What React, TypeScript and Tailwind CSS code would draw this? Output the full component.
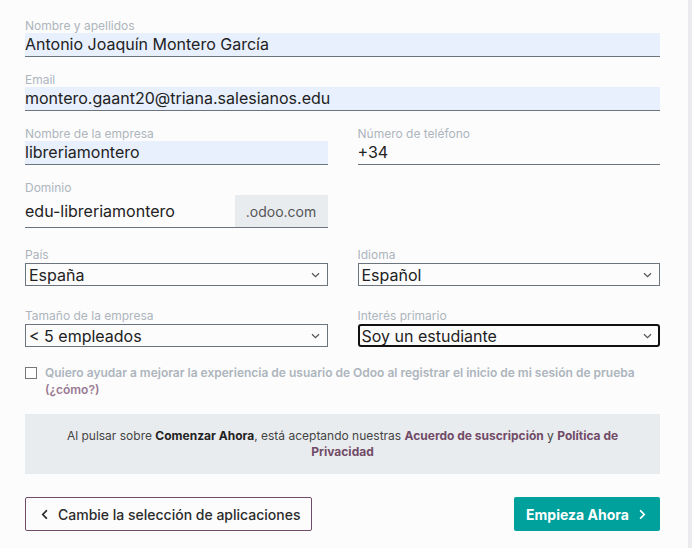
import { FaChevronLeft, FaChevronRight } from "react-icons/fa";

function Label({ children }: { children: React.ReactNode }) {
  return <div className="text-[12px] leading-[14px] text-[#adb5bd]">{children}</div>;
}

function Filled({ value }: { value: string }) {
  return (
    <div className="h-[24px] bg-[#e8f0fe] border-b border-[#6c757d] text-[16px] leading-[23px] text-[#222]">
      {value}
    </div>
  );
}

function Plain({ value }: { value: string }) {
  return (
    <div className="h-[24px] border-b border-[#6c757d] text-[16px] leading-[23px] text-[#222]">{value}</div>
  );
}

function Caret() {
  return (
    <svg width="9" height="6" viewBox="0 0 9 6" className="text-[#555]">
      <path d="M1 1.2 L4.5 4.6 L8 1.2" fill="none" stroke="currentColor" strokeWidth="1.2" />
    </svg>
  );
}

function Select({ value, focused }: { value: string; focused?: boolean }) {
  return (
    <div
      className={`flex h-[23px] items-center justify-between text-[16px] text-[#222] ${
        focused ? "border-2 border-[#111] rounded-[3px] pl-[2px] pr-[6px]" : "border border-[#6c757d] pl-[3px] pr-[7px]"
      }`}
    >
      <span>{value}</span>
      <Caret />
    </div>
  );
}

export default function App() {
  return (
    <div className="flex min-h-[548px] bg-[#fcfcfc] font-['Inter',sans-serif]">
      <div className="flex-1 pl-[25px] pr-[28px] pt-[19px]">
        {/* personal */}
        <div className="mb-[16px]">
          <Label>Nombre y apellidos</Label>
          <Filled value="Antonio Joaquín Montero García" />
        </div>
        <div className="mb-[16px]">
          <Label>Email</Label>
          <Filled value="montero.gaant20@triana.salesianos.edu" />
        </div>

        <div className="grid grid-cols-2 gap-x-[30px]">
          <div className="mb-[16px]">
            <Label>Nombre de la empresa</Label>
            <Filled value="libreriamontero" />
          </div>
          <div className="mb-[16px]">
            <Label>Número de teléfono</Label>
            <Plain value="+34" />
          </div>

          <div className="mb-[20px]">
            <Label>Dominio</Label>
            <div className="flex h-[33px] border-b border-[#6c757d]">
              <div className="flex flex-1 items-center text-[16px] text-[#222]">edu-libreriamontero</div>
              <div className="flex w-[93px] items-center justify-center bg-[#e9ecef] text-[14px] text-[#555]">
                .odoo.com
              </div>
            </div>
          </div>
          <div />

          <div className="mb-[23px]">
            <Label>País</Label>
            <div className="mt-[1px]">
              <Select value="España" />
            </div>
          </div>
          <div className="mb-[23px]">
            <Label>Idioma</Label>
            <div className="mt-[1px]">
              <Select value="Español" />
            </div>
          </div>

          <div className="mb-[17px]">
            <Label>Tamaño de la empresa</Label>
            <div className="mt-[1px]">
              <Select value="< 5 empleados" />
            </div>
          </div>
          <div className="mb-[17px]">
            <Label>Interés primario</Label>
            <div className="mt-[1px]">
              <Select value="Soy un estudiante" focused />
            </div>
          </div>
        </div>

        {/* consent */}
        <div className="flex gap-[8px]">
          <div className="mt-[3px] h-[12px] w-[12px] shrink-0 border border-[#777] bg-white" />
          <div className="text-[12px] font-semibold leading-[17px] text-[#adb5bd]">
            Quiero ayudar a mejorar la experiencia de usuario de Odoo al registrar el inicio de mi sesión de prueba
            <br />
            <span className="text-[#9a7a93]">(¿cómo?)</span>
          </div>
        </div>

        <div className="mt-[16px] bg-[#e9ecef] px-[40px] py-[14px] text-center text-[12px] leading-[16px] text-[#444]">
          Al pulsar sobre <b className="text-[#222]">Comenzar Ahora</b>, está aceptando nuestras{" "}
          <b className="text-[#714B67]">Acuerdo de suscripción</b> y{" "}
          <b className="text-[#714B67]">Política de Privacidad</b>
        </div>

        <div className="mt-[23px] flex justify-between">
          <button className="flex h-[34px] w-[287px] items-center gap-[8px] rounded-[2px] border border-[#714B67] pl-[13px] text-[14px] font-medium text-[#2b2b2b]">
            <FaChevronLeft className="h-[11px] w-[11px]" />
            Cambie la selección de aplicaciones
          </button>
          <button className="flex h-[34px] w-[146px] items-center justify-center gap-[8px] rounded-[2px] bg-[#00A09D] text-[14px] font-bold text-white">
            Empieza Ahora
            <FaChevronRight className="h-[11px] w-[11px]" />
          </button>
        </div>
      </div>
      <div className="w-[4px] bg-[#ebebee]" />
    </div>
  );
}
